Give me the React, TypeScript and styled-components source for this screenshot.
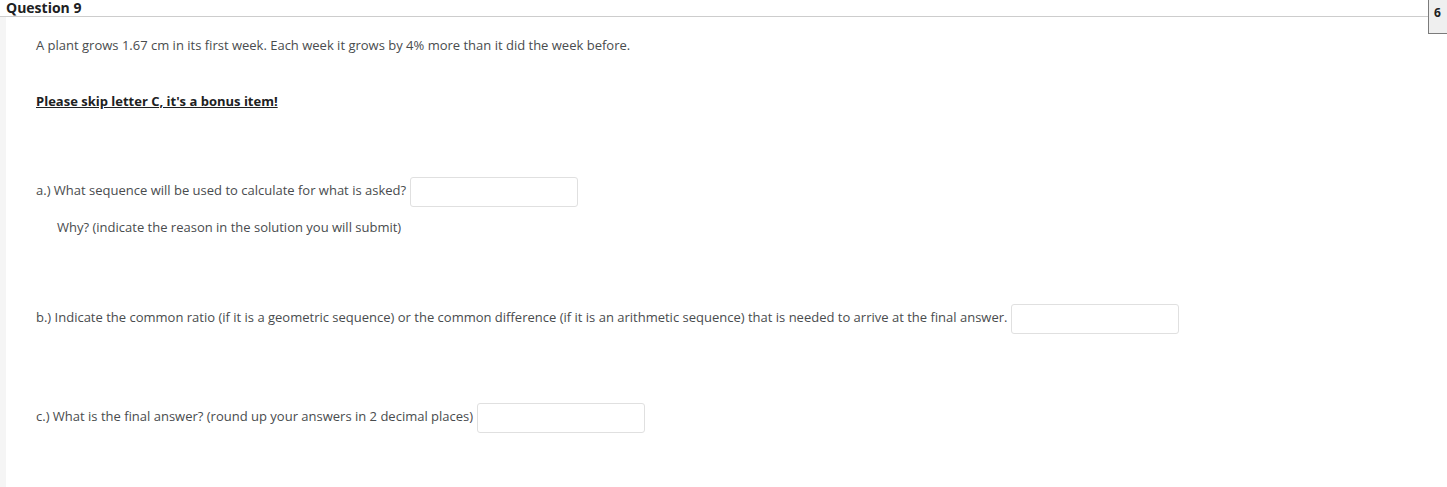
import React from 'react'
import styled, { createGlobalStyle } from 'styled-components'

const GlobalStyle = createGlobalStyle`
  html, body {
    margin: 0;
    padding: 0;
    background: #ffffff;
  }
  body {
    font-family: 'Open Sans', 'Noto Sans', sans-serif;
    color: #494c4e;
  }
`

const Page = styled.div`
  width: 1447px;
  height: 487px;
  display: flex;
  flex-direction: column;
  overflow: hidden;
`

const Header = styled.div`
  height: 17px;
  display: flex;
  align-items: flex-start;
`

const TitleBar = styled.div`
  flex: 1;
  height: 16px;
  padding-left: 6px;
  border-bottom: 1px solid #cdcdcd;
  display: flex;
  align-items: flex-start;
`

const Title = styled.h2`
  margin: 0;
  font-size: 14px;
  font-weight: 700;
  line-height: 15px;
  color: #202122;
`

const Points = styled.div`
  width: 13px;
  height: 33px;
  flex-shrink: 0;
  background: #efefef;
  border-left: 1px solid #7b7b7b;
  border-bottom: 1px solid #7b7b7b;
  font-size: 12px;
  font-weight: 700;
  color: #202122;
  line-height: 26px;
  padding-left: 5px;
  position: relative;
  z-index: 1;
`

const Body = styled.div`
  flex: 1;
  display: flex;
`

const Stripe = styled.div`
  width: 6px;
  background: #f5f5f5;
`

const Content = styled.div`
  flex: 1;
  padding: 18px 0 0 30px;
`

const Text = styled.p<{ $indent?: number; $top?: number }>`
  margin: ${(p) => p.$top ?? 0}px 0 0 ${(p) => p.$indent ?? 0}px;
  font-size: 13px;
  line-height: 20px;
`

const Notice = styled.p<{ $top: number }>`
  margin: ${(p) => p.$top}px 0 0;
  font-size: 13px;
  line-height: 20px;
  font-weight: 700;
  color: #202122;
  text-decoration: underline;
`

const Row = styled.div<{ $top: number }>`
  margin-top: ${(p) => p.$top}px;
  display: flex;
  align-items: center;
  gap: 4px;
  font-size: 13px;
`

const Label = styled.span`
  line-height: 20px;
  padding-bottom: 4px;
`

const Answer = styled.input`
  width: 168px;
  height: 30px;
  box-sizing: border-box;
  border: 1px solid #e0e0e0;
  border-radius: 3px;
  background: #ffffff;
  padding: 0 6px;
  font-family: inherit;
  font-size: 13px;
  outline: none;
`

export default function App() {
  return (
    <Page>
      <GlobalStyle />
      <Header>
        <TitleBar>
          <Title>Question 9</Title>
        </TitleBar>
        <Points>6</Points>
      </Header>
      <Body>
        <Stripe />
        <Content>
          <Text>A plant grows 1.67 cm in its first week. Each week it grows by 4% more than it did the week before.</Text>
          <Notice $top={36}>Please skip letter C, it's a bonus item!</Notice>
          <Row $top={66}>
            <Label>a.) What sequence will be used to calculate for what is asked?</Label>
            <Answer type="text" />
          </Row>
          <Text $indent={21} $top={10}>Why? (indicate the reason in the solution you will submit)</Text>
          <Row $top={67}>
            <Label>
              b.) Indicate the common ratio (if it is a geometric sequence) or the common difference (if it is an
              arithmetic sequence) that is needed to arrive at the final answer.
            </Label>
            <Answer type="text" />
          </Row>
          <Row $top={69}>
            <Label>c.) What is the final answer? (round up your answers in 2 decimal places)</Label>
            <Answer type="text" />
          </Row>
        </Content>
      </Body>
    </Page>
  )
}
